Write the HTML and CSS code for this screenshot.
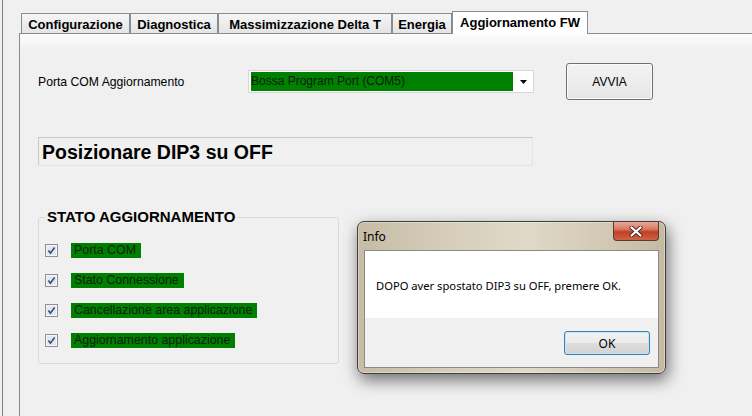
FILE: index.html
```html
<html>
<head>
  <title>Aggiornamento FW</title>
  <link rel="stylesheet" href="styles.css">
</head>
<body>
  <div class="window">
    <div class="tabs">
      <div class="tab tab-config">Configurazione</div>
      <div class="tab tab-diag">Diagnostica</div>
      <div class="tab tab-delta">Massimizzazione Delta T</div>
      <div class="tab tab-energy">Energia</div>
      <div class="tab tab-fw active">Aggiornamento FW</div>
    </div>

    <div class="page">
      <div class="com-row">
        <span class="com-label">Porta COM Aggiornamento</span>
        <div class="combo">
          <span class="combo-value">Bossa Program Port (COM5)</span>
          <span class="combo-arrow">
            <svg width="7" height="4" viewBox="0 0 7 4"><polygon points="0,0 7,0 3.5,4" fill="#000"/></svg>
          </span>
        </div>
        <button class="btn btn-start">AVVIA</button>
      </div>

      <div class="status-box">Posizionare DIP3 su OFF</div>

      <fieldset class="group">
        <legend>STATO AGGIORNAMENTO</legend>
        <div class="step">
          <svg class="check" width="13" height="13" viewBox="0 0 13 13"><rect x="0.5" y="0.5" width="12" height="12" fill="#f6f6f6" stroke="#8e8f8f"/><rect x="2" y="2" width="9" height="9" fill="#e3e7ef"/><path d="M3.4 6.6 L5.4 9.2 L9.6 3.4" fill="none" stroke="#3a4f82" stroke-width="1.7"/></svg>
          <span class="step-label">Porta COM</span>
        </div>
        <div class="step">
          <svg class="check" width="13" height="13" viewBox="0 0 13 13"><rect x="0.5" y="0.5" width="12" height="12" fill="#f6f6f6" stroke="#8e8f8f"/><rect x="2" y="2" width="9" height="9" fill="#e3e7ef"/><path d="M3.4 6.6 L5.4 9.2 L9.6 3.4" fill="none" stroke="#3a4f82" stroke-width="1.7"/></svg>
          <span class="step-label">Stato Connessione</span>
        </div>
        <div class="step">
          <svg class="check" width="13" height="13" viewBox="0 0 13 13"><rect x="0.5" y="0.5" width="12" height="12" fill="#f6f6f6" stroke="#8e8f8f"/><rect x="2" y="2" width="9" height="9" fill="#e3e7ef"/><path d="M3.4 6.6 L5.4 9.2 L9.6 3.4" fill="none" stroke="#3a4f82" stroke-width="1.7"/></svg>
          <span class="step-label">Cancellazione area applicazione</span>
        </div>
        <div class="step">
          <svg class="check" width="13" height="13" viewBox="0 0 13 13"><rect x="0.5" y="0.5" width="12" height="12" fill="#f6f6f6" stroke="#8e8f8f"/><rect x="2" y="2" width="9" height="9" fill="#e3e7ef"/><path d="M3.4 6.6 L5.4 9.2 L9.6 3.4" fill="none" stroke="#3a4f82" stroke-width="1.7"/></svg>
          <span class="step-label">Aggiornamento applicazione</span>
        </div>
      </fieldset>
    </div>
  </div>

  <!-- message box on top of the form -->
  <div class="dialog">
    <div class="dialog-title">
      <span>Info</span>
      <span class="close-btn">
        <svg width="14" height="11" viewBox="0 0 14 11">
          <path d="M2.5 1.5 L11.5 9.5 M11.5 1.5 L2.5 9.5" stroke="#4a2a22" stroke-width="4" stroke-linecap="round"/>
          <path d="M2.5 1.5 L11.5 9.5 M11.5 1.5 L2.5 9.5" stroke="#fff" stroke-width="2.2" stroke-linecap="round"/>
        </svg>
      </span>
    </div>
    <div class="dialog-client">
      <div class="dialog-msg">DOPO aver spostato DIP3 su OFF, premere OK.</div>
      <div class="dialog-buttons">
        <button class="btn btn-ok">OK</button>
      </div>
    </div>
  </div>
</body>
</html>
```

FILE: styles.css
```css
body {
  margin: 0;
  height: 416px;
  overflow: hidden;
  background-color: #f0f0f0;
  font-family: "Liberation Sans", Arial, sans-serif;
  font-size: 12px;
  color: #000;
}

.window {
  display: flex;
  flex-direction: column;
  margin-left: 2px;
  border-left: 1px solid #7d7d7d;
  height: 416px;
  padding: 11px 0 0 16px;
  box-sizing: border-box;
}

/* tab strip */
.tabs {
  display: flex;
  align-items: flex-end;
  height: 22px;
  padding-left: 2px;
}

.tab {
  box-sizing: border-box;
  height: 20px;
  line-height: 21px;
  text-align: center;
  font-size: 13px;
  font-weight: bold;
  border: 1px solid #898c95;
  border-bottom: none;
  background: linear-gradient(#f6f6f6, #e4e4e4);
  white-space: nowrap;
}

.tab-config { width: 109px; }
.tab-diag { width: 88px; }
.tab-delta { width: 174px; }
.tab-energy { width: 60px; }
.tab-fw { width: 136px; }

.tab.active {
  height: 23px;
  line-height: 21px;
  margin-bottom: -1px;
  background: #fff;
  position: relative;
  z-index: 1;
}

.page {
  flex: 1;
  border-top: 1px solid #898c95;
  border-left: 1px solid #898c95;
  padding: 29px 0 0 18px;
  background: linear-gradient(#fcfcfc 0, #f0f0f0 16px);
}

/* COM port row */
.com-row {
  display: flex;
  align-items: center;
}

.com-label {
  width: 210px;
  font-size: 12.2px;
}

.combo {
  display: flex;
  box-sizing: border-box;
  width: 286px;
  height: 23px;
  padding: 1px 0 1px 2px;
  border: 1px solid #d7d7d7;
  background: #fff;
}

.combo-value {
  width: 262px;
  line-height: 19px;
  background-color: #008000;
  color: #0c200c;
  white-space: nowrap;
}

.combo-arrow {
  flex: 1;
  display: flex;
  align-items: center;
  justify-content: center;
}

.btn {
  font-family: "Liberation Sans", Arial, sans-serif;
  font-size: 12px;
  color: #000;
  border: 1px solid #707070;
  border-radius: 3px;
  background: linear-gradient(#f3f3f3, #e6e6e6);
  box-shadow: inset 0 0 0 1px #fbfbfb;
  padding: 0;
}

.btn-start {
  width: 87px;
  height: 37px;
  margin-left: 32px;
}

.status-box {
  box-sizing: border-box;
  width: 495px;
  height: 29px;
  margin-top: 37px;
  padding-left: 3px;
  line-height: 29px;
  font-size: 19.5px;
  font-weight: bold;
  border: 1px solid #c9c9c9;
  border-right-color: #e4e4e4;
  border-bottom-color: #e4e4e4;
}

/* group box */
.group {
  box-sizing: border-box;
  width: 301px;
  margin: 43px 0 0 0;
  padding: 10px 0 8px 6px;
  border: 1px solid #dadada;
  border-radius: 3px;
}

.group legend {
  padding: 0 2px;
  font-size: 15px;
  line-height: 16px;
  font-weight: bold;
}

.step {
  display: flex;
  align-items: center;
  height: 30px;
}

.check {
  margin-right: 13px;
}

.step-label {
  font-size: 12.4px;
  line-height: 15px;
  padding: 0 5px 0 3px;
  background-color: #008000;
  color: #0c200c;
}

/* Info dialog */
.dialog {
  position: absolute;
  left: 357px;
  top: 221px;
  width: 309px;
  height: 153px;
  box-sizing: border-box;
  border: 1px solid #3f3f3f;
  border-radius: 7px;
  background: linear-gradient(to right, #c6bca5 0%, #d6cebb 30%, #e0d9c9 55%, #d2c9b4 80%, #c4baa2 100%);
  box-shadow: 0 0 0 1px rgba(255, 255, 255, 0.35) inset, 2px 6px 16px rgba(0, 0, 0, 0.55);
  font-family: "Noto Sans", "Open Sans", sans-serif;
}

.dialog-title {
  position: relative;
  height: 28px;
  padding-left: 5px;
  line-height: 29px;
  font-size: 12px;
}

.close-btn {
  position: absolute;
  top: 0;
  right: 6px;
  width: 46px;
  height: 19px;
  box-sizing: border-box;
  border: 1px solid #5a3a32;
  border-top: none;
  border-radius: 0 0 4px 4px;
  background: linear-gradient(#e9a899 0%, #d67a63 40%, #c23e22 55%, #cf6447 100%);
  display: flex;
  align-items: center;
  justify-content: center;
}

.dialog-client {
  margin: 0 6px;
  border: 1px solid #8a8a8a;
  height: 118px;
  box-sizing: border-box;
  background: #f0f0f0;
}

.dialog-msg {
  height: 67px;
  box-sizing: border-box;
  padding: 26px 0 0 11px;
  line-height: 18px;
  font-size: 11.2px;
  background: #fff;
}

.dialog-buttons {
  display: flex;
  justify-content: flex-end;
  padding: 13px 8px 0 0;
}

.btn-ok {
  width: 86px;
  height: 24px;
  font-family: "Noto Sans", "Open Sans", sans-serif;
  border-color: #3c7fb1;
  box-shadow: inset 0 0 0 1px #c4e5f6;
  background: linear-gradient(#f2f2f2 0%, #ebebeb 50%, #dddddd 51%, #d3d3d3 100%);
}
```
